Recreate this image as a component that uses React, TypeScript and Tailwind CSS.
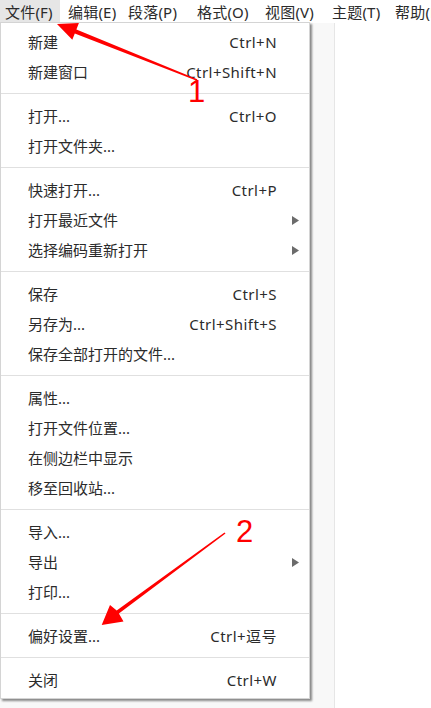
type Item = { label: string; shortcut?: string; sub?: boolean };

const groups: Item[][] = [
  [
    { label: "新建", shortcut: "Ctrl+N" },
    { label: "新建窗口", shortcut: "Ctrl+Shift+N" },
  ],
  [{ label: "打开...", shortcut: "Ctrl+O" }, { label: "打开文件夹..." }],
  [
    { label: "快速打开...", shortcut: "Ctrl+P" },
    { label: "打开最近文件", sub: true },
    { label: "选择编码重新打开", sub: true },
  ],
  [
    { label: "保存", shortcut: "Ctrl+S" },
    { label: "另存为...", shortcut: "Ctrl+Shift+S" },
    { label: "保存全部打开的文件..." },
  ],
  [
    { label: "属性..." },
    { label: "打开文件位置..." },
    { label: "在侧边栏中显示" },
    { label: "移至回收站..." },
  ],
  [{ label: "导入..." }, { label: "导出", sub: true }, { label: "打印..." }],
  [{ label: "偏好设置...", shortcut: "Ctrl+逗号" }],
  [{ label: "关闭", shortcut: "Ctrl+W" }],
];

// menu bar entries with their widths in the bar
const bar = [
  { t: "文件(F)", w: "w-[60px] mr-[3px] bg-[#e6e6e6]" },
  { t: "编辑(E)", w: "w-[60px]" },
  { t: "段落(P)", w: "w-[69px]" },
  { t: "格式(O)", w: "w-[68px]" },
  { t: "视图(V)", w: "w-[67px]" },
  { t: "主题(T)", w: "w-[63px]" },
  { t: "帮助(H)", w: "w-[70px]" },
];

function Row({ item }: { item: Item }) {
  return (
    <div className="flex h-[30px] items-center pl-[27px]">
      <span className="flex-1">{item.label}</span>
      {item.shortcut && <span className="tracking-[0.45px]">{item.shortcut}</span>}
      <span className="flex w-[32px] items-center">
        {item.sub && (
          <svg width="7" height="9" viewBox="0 0 7 9" className="ml-[15px]">
            <path d="M0 0 L7 4.5 L0 9 Z" fill="#6b6b6b" />
          </svg>
        )}
      </span>
    </div>
  );
}

export default function App() {
  return (
    <div className="relative flex h-[708px] w-[431px] flex-col overflow-hidden bg-white font-['Noto_Sans','Noto_Sans_CJK_SC',sans-serif] text-[15px] text-[#2b2b2b]">
      <div className="flex h-[23px] shrink-0 items-center whitespace-nowrap">
        {bar.map((b) => (
          <div key={b.t} className={`flex h-full shrink-0 items-center pl-[5px] pt-[2px] tracking-[0.2px] ${b.w}`}>
            {b.t}
          </div>
        ))}
      </div>

      <div className="flex flex-1">
        <div className="w-[335px] border-r border-[#e6e6e6] bg-[#f8f8f8]" />
        <div className="flex-1 bg-white" />
      </div>

      {/* file menu */}
      <div className="absolute left-0 top-[22px] w-[310px] border border-[#d4d4d4] bg-white pb-[3px] pt-[4px] shadow-[2px_2px_2px_rgba(0,0,0,0.45)]">
        {groups.map((g, gi) => (
          <div key={gi}>
            {gi > 0 && <div className="mb-[7px] mt-[6px] h-px bg-[#e0e0e0]" />}
            {g.map((it) => (
              <Row key={it.label} item={it} />
            ))}
          </div>
        ))}
      </div>

      {/* annotations */}
      <svg
        className="pointer-events-none absolute left-0 top-0"
        width="431"
        height="708"
        viewBox="0 0 431 708"
      >
        <polygon
          fill="#ff0000"
          points="57,24 72.3,39.8 74.8,33.4 196.8,80.7 197.3,79.3 76.4,29.4 78.9,23"
        />
        <polygon
          fill="#ff0000"
          points="101.7,625 123.5,621.5 118.9,613.6 225.5,533.6 224.5,532.4 116.7,610.6 110,605"
        />
        <text x="188" y="102" fontSize="31" fill="#ff0000" fontFamily="Liberation Sans">
          1
        </text>
        <text x="236" y="542" fontSize="31" fill="#ff0000" fontFamily="Liberation Sans">
          2
        </text>
      </svg>
    </div>
  );
}
